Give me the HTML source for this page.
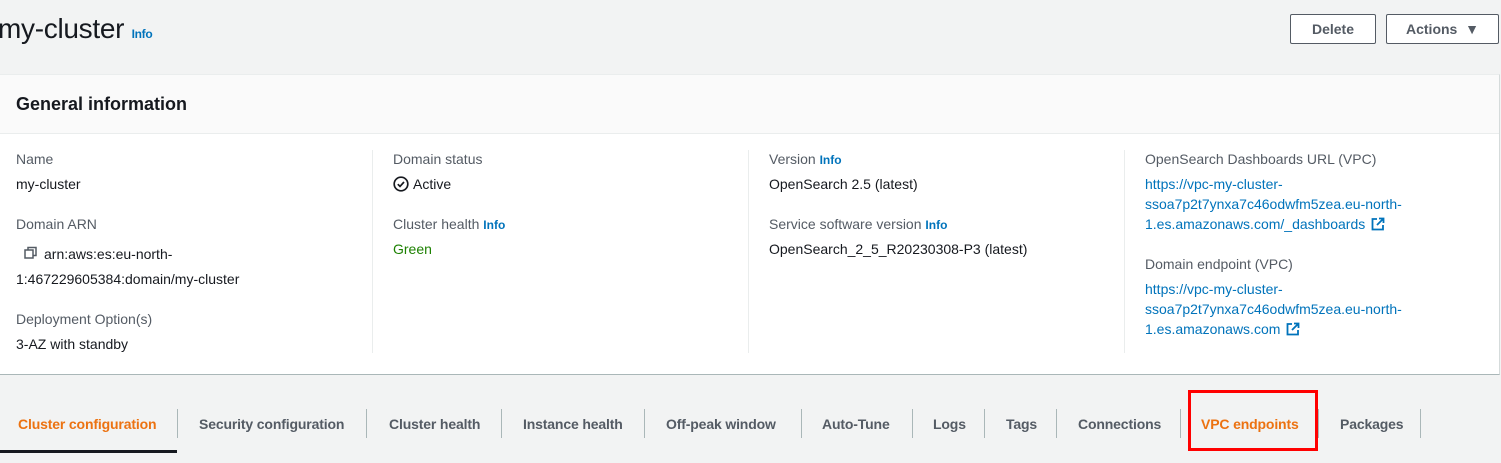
<!DOCTYPE html>
<html><head><style>
*{margin:0;padding:0;box-sizing:border-box}
body{width:1501px;height:463px;background:#f2f3f3;font-family:"Liberation Sans",sans-serif;color:#16191f;position:relative;overflow:hidden;font-size:14px}
.abs{position:absolute;white-space:nowrap}
h1{position:absolute;left:-2px;top:13px;font-size:28px;font-weight:400;letter-spacing:-0.3px}
.info{color:#0073bb;font-size:12px;font-weight:700}
.btn{position:absolute;top:14px;height:30px;border:1px solid #545b64;border-radius:2px;background:#fff;font-weight:700;color:#545b64;font-size:14px;line-height:28px;text-align:center}
.panel{position:absolute;left:0;top:74px;width:1500px;height:301px;background:#fff;border-top:1px solid #eaeded;border-right:1px solid #d5dbdb;border-bottom:1px solid #aab7b8}
.ph{height:59px;background:#fafafa;border-bottom:1px solid #eaeded;padding:19px 16px;font-size:18px;font-weight:700}
.lbl{color:#545b64}
.lk{color:#0073bb}
.div{position:absolute;top:150px;width:1px;height:203px;background:#eaeded}
.tab{position:absolute;top:416px;font-weight:700;color:#545b64;font-size:14px;letter-spacing:-0.15px}
.sep{position:absolute;top:409px;width:1px;height:29px;background:#aab7b8}
</style></head><body>
<h1>my-cluster <span class="info">Info</span></h1>
<div class="btn" style="left:1290px;width:86px">Delete</div>
<div class="btn" style="left:1386px;width:113px">Actions &nbsp;▼</div>
<div class="panel"><div class="ph">General information</div></div>
<div class="div" style="left:372px"></div><div class="div" style="left:748px"></div><div class="div" style="left:1124px"></div>
<div class="abs lbl" style="left:16px;top:151px">Name</div>
<div class="abs" style="left:16px;top:176px">my-cluster</div>
<div class="abs lbl" style="left:16px;top:216px">Domain ARN</div>
<div class="abs" style="left:24px;top:246px"><svg width="14" height="14" viewBox="0 0 14 14" style="vertical-align:-1px;margin-right:6px"><rect x="1" y="4" width="8" height="8" fill="none" stroke="#545b64" stroke-width="1.5"/><path d="M4 4V1.5h8v8H9" fill="none" stroke="#545b64" stroke-width="1.5"/></svg>arn:aws:es:eu-north-</div>
<div class="abs" style="left:16px;top:271px">1:467229605384:domain/my-cluster</div>
<div class="abs lbl" style="left:16px;top:311px">Deployment Option(s)</div>
<div class="abs" style="left:16px;top:336px">3-AZ with standby</div>

<div class="abs lbl" style="left:393px;top:151px">Domain status</div>
<div class="abs" style="left:393px;top:176px"><svg width="16" height="16" viewBox="0 0 16 16" style="vertical-align:-3px;margin-right:4px"><circle cx="8" cy="8" r="6.8" fill="none" stroke="#16191f" stroke-width="1.7"/><path d="M4.8 8.2l2.2 2.2 4-4.4" fill="none" stroke="#16191f" stroke-width="1.7"/></svg>Active</div>
<div class="abs lbl" style="left:393px;top:216px">Cluster health <span class="info">Info</span></div>
<div class="abs" style="left:393px;top:241px;color:#1d8102">Green</div>

<div class="abs lbl" style="left:769px;top:151px">Version <span class="info">Info</span></div>
<div class="abs" style="left:769px;top:176px">OpenSearch 2.5 (latest)</div>
<div class="abs lbl" style="left:769px;top:216px">Service software version <span class="info">Info</span></div>
<div class="abs" style="left:769px;top:241px">OpenSearch_2_5_R20230308-P3 (latest)</div>

<div class="abs lbl" style="left:1145px;top:151px">OpenSearch Dashboards URL (VPC)</div>
<div class="abs lk" style="left:1145px;top:174px;line-height:20px">https://vpc-my-cluster-<br>ssoa7p2t7ynxa7c46odwfm5zea.eu-north-<br>1.es.amazonaws.com/_dashboards <svg width="14" height="14" viewBox="0 0 14 14" style="vertical-align:-2px;margin-left:2px"><path d="M6 2H1.5v10.5H12V8M8 1.5h4.5V6M12.5 1.5L6 8" fill="none" stroke="#0073bb" stroke-width="1.8"/></svg></div>
<div class="abs lbl" style="left:1145px;top:256px">Domain endpoint (VPC)</div>
<div class="abs lk" style="left:1145px;top:279px;line-height:20px">https://vpc-my-cluster-<br>ssoa7p2t7ynxa7c46odwfm5zea.eu-north-<br>1.es.amazonaws.com <svg width="14" height="14" viewBox="0 0 14 14" style="vertical-align:-2px;margin-left:2px"><path d="M6 2H1.5v10.5H12V8M8 1.5h4.5V6M12.5 1.5L6 8" fill="none" stroke="#0073bb" stroke-width="1.8"/></svg></div>

<div class="tab" style="left:18px;color:#ec7211">Cluster configuration</div>
<div style="position:absolute;left:0;top:450px;width:177px;height:3px;background:#16191f"></div>
<div class="sep" style="left:177px"></div>
<div class="tab" style="left:199px">Security configuration</div>
<div class="sep" style="left:366px"></div>
<div class="tab" style="left:389px">Cluster health</div>
<div class="sep" style="left:501px"></div>
<div class="tab" style="left:523px">Instance health</div>
<div class="sep" style="left:644px"></div>
<div class="tab" style="left:666px">Off-peak window</div>
<div class="sep" style="left:801px"></div>
<div class="tab" style="left:822px">Auto-Tune</div>
<div class="sep" style="left:912px"></div>
<div class="tab" style="left:933px">Logs</div>
<div class="sep" style="left:984px"></div>
<div class="tab" style="left:1006px">Tags</div>
<div class="sep" style="left:1056px"></div>
<div class="tab" style="left:1078px">Connections</div>
<div class="sep" style="left:1180px"></div>
<div class="tab" style="left:1201px;color:#ec7211">VPC endpoints</div>
<div style="position:absolute;left:1188px;top:390px;width:130px;height:61px;border:3px solid #f00"></div>
<div class="sep" style="left:1318px"></div>
<div class="tab" style="left:1340px">Packages</div>
<div class="sep" style="left:1420px"></div>
</body></html>
